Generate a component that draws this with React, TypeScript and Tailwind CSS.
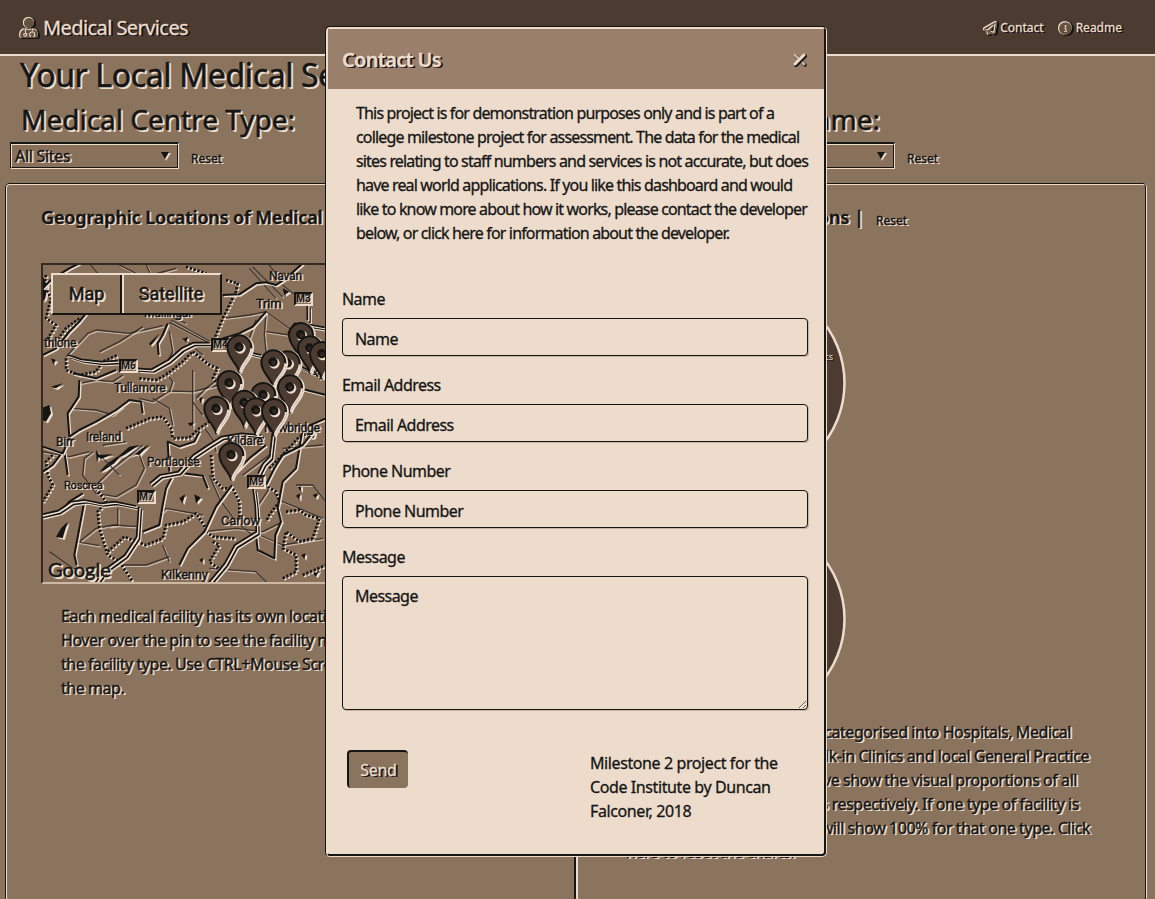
import React from "react";
import { FaUserMd, FaRegPaperPlane, FaInfoCircle } from "react-icons/fa";

const raised =
  "text-[#151514] [-webkit-text-stroke:0.4px_#151514] [text-shadow:1px_1px_0_#eddccc,2px_1px_0_#eddccc]";
const raisedLarge =
  "text-[#151514] [-webkit-text-stroke:0.5px_#151514] [text-shadow:1px_1px_0_#eddccc,2px_1px_0_#eddccc,2px_2px_0_#eddccc]";
const onDark =
  "text-[#eddccc] [-webkit-text-stroke:0.3px_#eddccc] [text-shadow:1px_1px_0_#151514,2px_1px_0_#151514]";
const iconRelief =
  "text-[#66513f] [filter:drop-shadow(-1px_0_0_#eddccc)_drop-shadow(0_-1px_0_#eddccc)_drop-shadow(1px_1px_0_#151514)_drop-shadow(1px_0_0_#151514)]";

const motorways = [
  "M100 305 L140 318 L200 325 L250 322 M305 345 L350 348 L400 320 L440 285 L475 268 L525 268 M640 296 L680 305",
  "M15 785 L70 772 L110 745 L150 740 L200 750 L240 745 L305 758 M345 690 L375 665 L430 655 L475 605 L520 575 L560 550 L620 540 L680 545",
  "M312 760 L306 850 L270 905 L215 945 L180 990",
  "M655 705 L662 760 L665 835 L600 875 L570 930 L520 990",
  "M670 660 L685 630 L705 610 L712 550 L715 520",
  "M818 155 L818 200",
  "M740 350 L790 335 L830 355 L870 350",
  "M760 240 L780 210 L830 215 L870 222",
  "M800 250 L815 270 L800 290 L820 330 L850 370",
];
const roads = [
  "M20 300 L60 280 L100 230 L130 200 L170 150",
  "M130 375 L128 425 L95 475 L100 545",
  "M110 355 L180 370 L240 345",
  "M100 545 L130 525 L180 500 L240 465 L280 435 L315 440 L320 475",
  "M560 120 L610 118 L660 85 L690 82 L720 90 L750 70 L800 25",
  "M395 205 L380 240 L365 265 L368 300",
  "M690 170 L650 215 L610 235 L560 250",
  "M145 740 L130 820 L115 900 L122 930",
  "M408 665 L390 700 L380 750 L370 810 L320 830",
  "M588 690 L540 755 L505 830 L455 880 L430 930",
  "M870 490 L800 520 L780 640 L740 680 L725 760 L735 800 L718 840 L715 910 L665 885 L660 840",
  "M80 590 L50 630 L20 650 M85 590 L95 660",
  "M20 575 L80 595 L100 550",
  "M400 650 L395 560 L430 575 L475 560 L490 530",
  "M440 655 L500 662 L515 700",
  "M740 430 L790 400 L870 420",
  "M20 100 L50 70 L100 40 L130 25",
  "M140 715 L100 740 L75 770 M600 650 L640 610 L690 570",
  "M840 520 L800 570 L740 600 L715 640 L690 690",
];
const lanes = [
  "M90 305 L155 235 L180 225 L280 235 L380 212",
  "M405 195 L520 258 M400 202 L515 262 M415 190 L450 205",
  "M190 290 L250 260 L320 215",
  "M560 190 L640 180 L690 170 L780 235",
  "M690 170 L685 240 L690 290 M740 90 L770 115 L800 130",
  "M660 195 L640 250 L600 245 M690 230 L760 240",
  "M130 385 L180 375 L230 380 L260 360 M105 460 L180 465 L230 480 L260 455",
  "M310 430 L350 440 L400 408 L470 410 L550 390",
  "M400 410 L410 380 L390 350 M350 430 L400 460 L410 510",
  "M470 345 L470 520 M470 440 L500 480",
  "M560 360 L510 400 L480 430",
  "M20 590 L100 605 L160 590 M200 570 L270 560",
  "M170 590 L145 610 L140 660 L180 715 L240 725 L300 690 L325 640 L310 600",
  "M380 770 L390 760 L500 780 M245 760 L245 810 L220 815",
  "M130 860 L180 820 L230 810 L310 815 M120 860 L190 872",
  "M230 930 L330 930 L400 905 M380 870 L400 920",
  "M500 830 L600 820 L680 830 L740 800",
  "M520 660 L550 730 L600 800 L660 850",
  "M660 760 L700 700 L740 740 L860 790 M670 840 L740 870 L860 850",
  "M540 590 L535 560 L500 510 M620 660 L700 600",
  "M40 890 L110 940 L170 950 M520 940 L660 950 L700 990",
  "M160 25 L190 60 M250 30 L300 55 M330 28 L345 60 L420 40",
  "M400 230 L410 290 L395 320 M440 250 L500 300",
  "M780 690 L830 690 L870 740 M740 580 L860 570",
  "M640 40 L720 130 M650 35 L740 125 M700 30 L740 80",
  "M180 690 L230 640 L320 570 M200 610 L250 660",
];
const borders = [
  "M450 35 L510 55 M570 75 L605 85 L600 110 L560 190 L540 240 L530 265",
  "M30 60 L25 90 L45 130 L30 190 L60 210 L30 260",
  "M90 310 L90 345 L130 360 L180 350 L200 320 L245 300",
  "M470 290 L520 330 L545 340 L530 370 L545 385 L590 400",
  "M270 520 L340 490 L380 485 L405 520 L410 550 L460 548 L490 520 L520 500",
  "M310 370 L360 375 L390 360 L440 320 L470 290",
  "M50 600 L30 620 L35 660 L50 690 L20 740",
  "M180 700 L210 740 L185 770 L190 820 L215 900 L250 920 L290 980",
  "M215 890 L265 845 L300 860 L330 870 L380 850 L390 810 L440 800 L480 775 L510 820",
  "M525 600 L530 670 L560 700 L590 700 L610 740 L610 800",
  "M510 830 L530 845 L600 850 M530 860 L550 870 L520 920 L560 950",
  "M695 695 L720 710 L730 740 L700 780 L690 800 M750 770 L790 765 L810 780 L850 790 L830 850 L790 860 L750 830 L740 880 L780 900 L780 950 L740 970",
  "M700 640 L740 600 L790 545 L830 530",
  "M130 190 L90 220 L60 260 M800 960 L870 930",
];
const hills =
  "M340 265 L370 235 L352 262 L342 272Z M442 252 L455 245 L450 265Z M430 730 L447 718 L440 745Z M475 718 L495 728 L480 745Z M190 650 L215 625 L260 595 L235 625 L205 645Z M180 600 L230 598 L195 612Z M240 610 L280 575 L310 570 L265 600Z M275 605 L340 568 L310 600 L295 598Z M180 585 L190 600 L182 620Z M785 695 L795 690 L795 710Z M830 720 L845 715 L840 730Z M780 722 L792 715 L790 735Z M820 550 L840 520 L834 548Z M795 900 L808 895 L806 912Z M490 915 L500 908 L500 925Z M75 820 L95 800 L80 850 L60 845Z M15 460 L40 450 L45 475 L30 500 L20 495Z M45 395 L80 385 L60 400Z M488 425 L500 428 L494 445Z M18 60 L35 90 L28 130 L20 140Z M45 310 L60 315 L52 328Z M740 100 L760 110 L745 120Z M455 505 L475 500 L465 515Z M830 955 L850 945 L840 965Z";

const pins: [number, number][] = [
  [795, 240], [755, 325], [822, 280], [712, 322], [858, 297], [610, 277], [682, 420],
  [580, 384], [762, 397], [625, 443], [541, 461], [660, 466], [714, 468], [586, 600],
];

const places: [string, string][] = [
  ["Navan", "left-[226px] top-[4px] text-[12px]"],
  ["Trim", "left-[213px] top-[32px] text-[13px]"],
  ["Mullingar", "left-[101px] top-[41px] text-[12px]"],
  ["thlone", "left-[1px] top-[71px] text-[12px]"],
  ["Tullamore", "left-[71px] top-[116px] text-[12px]"],
  ["Ireland", "left-[43px] top-[165px] text-[12px]"],
  ["Birr", "left-[13px] top-[170px] text-[12px]"],
  ["Portlaoise", "left-[104px] top-[190px] text-[12px]"],
  ["Roscrea", "left-[21px] top-[214px] text-[11px]"],
  ["Kildare", "left-[184px] top-[169px] text-[12px]"],
  ["Newbridge", "left-[221px] top-[156px] text-[12px]"],
  ["Carlow", "left-[178px] top-[249px] text-[13px]"],
  ["Kilkenny", "left-[118px] top-[303px] text-[13px]"],
];
const shields: [string, string][] = [
  ["M3", "left-[251px] top-[27px]"],
  ["M4", "left-[168px] top-[73px]"],
  ["M6", "left-[76px] top-[94px]"],
  ["M7", "left-[94px] top-[225px]"],
  ["M9", "left-[204px] top-[210px]"],
];

function Relief({ d, w, dash, soft }: { d: string; w: number; dash?: string; soft?: boolean }) {
  return (
    <g fill="none" strokeWidth={w} strokeDasharray={dash} strokeLinejoin="round" opacity={soft ? 0.65 : 1}>
      <path d={d} stroke="#eddccc" transform="translate(4 4)" />
      <path d={d} stroke="#151514" />
    </g>
  );
}

function Pin({ x, y }: { x: number; y: number }) {
  const d = "M0 76 C-4 48 -36 34 -36 0 A36 36 0 0 1 36 0 C36 34 4 48 0 76Z";
  return (
    <g transform={`translate(${x} ${y})`}>
      <path d={d} fill="#eddccc" stroke="#eddccc" strokeWidth="7" transform="translate(5 2)" />
      <path d={d} fill="#4c3b30" stroke="#151514" strokeWidth="6" />
      <path d="M36 3 C34 34 5 48 2 74" fill="none" stroke="#eddccc" strokeWidth="6" />
      <circle r="16" cx="3" cy="3" fill="#eddccc" />
      <circle r="14" cx="-1" cy="-1" fill="#151514" />
      <circle r="7" cx="1" cy="1" fill="#33281f" />
    </g>
  );
}

function SiteMap() {
  return (
    <div className="relative h-[321px] w-[500px] overflow-hidden border-2 border-t-[#332a22] border-l-[#332a22] border-b-[#cdb8a3] border-r-[#cdb8a3] bg-[#88705b] font-[Roboto,sans-serif]">
      <svg className="absolute -left-[2px] -top-[2px] h-[321px] w-[500px]" viewBox="15 24 1500 963">
        <path d={hills} fill="#eddccc" transform="translate(6 5)" />
        <path d={hills} fill="#151514" />
        {lanes.map((d) => <Relief key={d} d={d} w={4} soft />)}
        {borders.map((d) => <Relief key={d} d={d} w={8} dash="7 5" />)}
        {roads.map((d) => <Relief key={d} d={d} w={6} />)}
        {motorways.map((d) => (
          <g key={d} fill="none" strokeLinejoin="round">
            <path d={d} stroke="#eddccc" strokeWidth="6" transform="translate(7 6)" />
            <path d={d} stroke="#151514" strokeWidth="5" transform="translate(4 3)" />
            <path d={d} stroke="#eddccc" strokeWidth="5" transform="translate(0 -1)" />
            <path d={d} stroke="#151514" strokeWidth="5" transform="translate(-4 -5)" />
          </g>
        ))}
      </svg>
      {places.map(([name, pos]) => (
        <span key={name} className={`absolute leading-[14px] tracking-[-0.2px] ${raised} ${pos}`}>{name}</span>
      ))}
      {shields.map(([name, pos]) => (
        <span key={name} className={`absolute h-[14px] w-[19px] border-2 border-t-[#151514] border-l-[#151514] border-b-[#eddccc] border-r-[#eddccc] bg-[#88705b] text-center text-[10px] font-bold leading-[10px] text-[#151514] [text-shadow:1px_1px_0_#eddccc] ${pos}`}>{name}</span>
      ))}
      <svg className="absolute -left-[2px] -top-[2px] h-[321px] w-[500px]" viewBox="15 24 1500 963">
        {pins.map(([x, y]) => <Pin key={`${x}-${y}`} x={x} y={y} />)}
      </svg>
      <div className="absolute left-[8px] top-[8px] flex h-[42px] w-[171px] border-2 border-t-[#eddccc] border-l-[#eddccc] border-b-[#151514] border-r-[#151514] bg-[#8b745e] text-[18px] leading-[37px]">
        <span className={`w-[69px] border-r-2 border-[#151514] text-center ${raisedLarge}`}>Map</span>
        <span className={`flex-1 border-l-2 border-[#eddccc] pr-[2px] text-center ${raisedLarge}`}>Satellite</span>
      </div>
      <span className={`absolute left-[5px] top-[292px] font-[Lato,sans-serif] text-[20px] leading-[24px] ${raisedLarge}`}>Google</span>
    </div>
  );
}

function Picker({ value }: { value: string }) {
  return (
    <div className="flex h-[27px] w-[169px] border border-t-2 border-b-[#eddccc] border-l-[#151514] border-r-[#eddccc] border-t-[#151514]">
      <div className={`flex flex-1 items-center justify-between border border-b-[#151514] border-l-[#eddccc] border-r-[#151514] border-t-[#eddccc] bg-[#88705b] pl-[3px] pr-[6px] text-[16px] leading-[22px] tracking-[-0.3px] ${raised}`}>
        <span>{value}</span>
        <svg className="h-[10px] w-[11px]" viewBox="0 0 11 10">
          <path d="M3 2h8l-5 8z" fill="#eddccc" />
          <path d="M1 1h8l-4 7z" fill="#151514" />
        </svg>
      </div>
    </div>
  );
}

function Card({ children }: { children: React.ReactNode }) {
  return (
    <div className="group flex h-[719px] w-[571px] rounded-[5px] border border-b-[#eddccc] border-l-[#151514] border-r-[#eddccc] border-t-[#151514] first:w-[570px] first:border-r-[#151514] last:w-[572px]">
      <div className="flex-1 rounded-[4px] border border-b-[#151514] border-l-[#eddccc] border-r-[#151514] border-t-[#eddccc] group-first:border-r-transparent group-last:border-l-2">{children}</div>
    </div>
  );
}

function Pie() {
  return (
    <svg className="h-[200px] w-[200px]" viewBox="0 0 200 200">
      <circle cx="100" cy="100" r="98.500" fill="#4c3b30" stroke="#eddccc" strokeWidth="2.500" />
    </svg>
  );
}

function Field({ label, multiline }: { label: string; multiline?: boolean }) {
  const box =
    "block w-[466px] rounded-[4px] border border-[#151514] bg-[#eddccc] px-[12px] text-[16px] leading-[24px] tracking-[-0.55px] text-[#151514] shadow-[1px_1px_0_#c9b4a0] placeholder:text-[#151514] placeholder:opacity-100";
  return (
    <label className="block h-[86px]">
      <span className="mb-[7px] block h-[24px] leading-[24px] tracking-[-0.55px]">{label}</span>
      {multiline ? (
        <textarea placeholder={label} className={`h-[134px] py-[7px] ${box}`} />
      ) : (
        <input placeholder={label} className={`h-[38px] pt-[3px] ${box}`} />
      )}
    </label>
  );
}

function ContactDialog() {
  return (
    <div className="absolute left-[325px] top-[26px] h-[831px] w-[502px] overflow-hidden rounded-[5px] border border-l-[#151514] border-t-[#151514] border-b-[#eddccc] border-r-[#eddccc] text-[#151514] [-webkit-text-stroke:0.3px]">
      <div className="h-[829px] w-[500px] rounded-[4px] border-2 border-b-[#151514] border-l-[#eddccc] border-r-[#151514] border-t-[#eddccc] bg-[#eddccc]">
        <div className="flex h-[60px] items-center justify-between bg-[#9a7f6a] pl-[14px] pr-[16px]">
          <span className={`pt-px text-[20px] font-semibold leading-[30px] tracking-[-0.7px] ${onDark}`}>Contact Us</span>
          <svg className="mt-px h-[16px] w-[16px]" viewBox="0 0 16 16" fill="none" strokeLinecap="round">
            <path d="M4 4l9 9" stroke="#151514" strokeWidth="3.500" />
            <path d="M3 3l9 9" stroke="#c7b29e" strokeWidth="3" />
            <path d="M13 4l-9 9" stroke="#151514" strokeWidth="4" />
            <path d="M12 3l-9 9" stroke="#eddccc" strokeWidth="3" />
          </svg>
        </div>
        <div className="px-[14px] pt-[12px]">
          <p className="mb-[42px] whitespace-nowrap pl-[14px] leading-[24px] tracking-[-0.84px]">
            This project is for demonstration purposes only and is part of a<br />
            college milestone project for assessment. The data for the medical<br />
            sites relating to staff numbers and services is not accurate, but does<br />
            have real world applications. If you like this dashboard and would<br />
            like to know more about how it works, please contact the developer<br />
            below, or click here for information about the developer.
          </p>
          <Field label="Name" />
          <Field label="Email Address" />
          <Field label="Phone Number" />
          <Field label="Message" multiline />
          <div className="flex pl-[5px] pt-[119px]">
            <button className={`h-[38px] w-[61px] rounded-[4px] border-l-2 border-t-2 border-[#151514] bg-[#8b745e] tracking-[-0.3px] ${onDark}`}>Send</button>
            <p className="whitespace-nowrap pl-[182px] pt-px leading-[24px] tracking-[-0.4px]">
              Milestone 2 project for the<br />Code Institute by Duncan<br />Falconer, 2018
            </p>
          </div>
        </div>
      </div>
    </div>
  );
}

export default function App() {
  return (
    <div className="relative h-[899px] w-[1155px] overflow-hidden bg-[#8b745e] font-['Noto_Sans',sans-serif] text-[16px]">
      <nav className="flex h-[56px] items-center justify-between border-b-2 border-[#eddccc] bg-[#4c3b30] pl-[20px] pr-[33px]">
        <div className={`flex items-center gap-[5px] pt-px text-[20px] tracking-[-0.58px] ${onDark}`}>
          <FaUserMd className={`h-[20px] w-[18px] ${iconRelief}`} />
          <span>Medical Services</span>
        </div>
        <div className={`flex items-center pt-[2px] text-[12px] ${onDark}`}>
          <FaRegPaperPlane className={`mr-[3px] h-[13px] w-[13px] ${iconRelief}`} />
          <span className="mr-[15px]">Contact</span>
          <FaInfoCircle className={`mr-[4px] h-[13px] w-[13px] ${iconRelief}`} />
          <span>Readme</span>
        </div>
      </nav>
      <h1 className={`h-[41px] whitespace-nowrap pl-[20px] text-[32px] leading-[38px] tracking-[-0.37px] ${raisedLarge}`}>Your Local Medical Services</h1>
      <div className="flex h-[86px]">
        <div className="w-[716px] pl-[10px]">
          <h2 className={`h-[45px] pl-[11px] text-[28px] leading-[44px] ${raisedLarge}`}>Medical Centre Type:</h2>
          <div className="flex">
            <Picker value="All Sites" />
            <span className={`pl-[12px] pt-[7px] text-[12px] leading-[20px] ${raised}`}>Reset</span>
          </div>
        </div>
        <div className="pl-[10px]">
          <h2 className={`flex h-[45px] w-[154px] justify-end whitespace-nowrap text-[28px] leading-[44px] ${raisedLarge}`}>Name:</h2>
          <div className="flex">
            <Picker value="" />
            <span className={`pl-[12px] pt-[7px] text-[12px] leading-[20px] ${raised}`}>Reset</span>
          </div>
        </div>
      </div>
      <div className="flex pl-[5px]">
        <Card>
          <div className="pl-[34px] pt-[17px]">
            <h3 className={`mb-[31px] h-[30px] whitespace-nowrap text-[18px] font-semibold leading-[30px] tracking-[-0.12px] ${raised}`}>Geographic Locations of Medical Sites</h3>
            <SiteMap />
            <p className={`whitespace-nowrap pl-[20px] pt-[20px] leading-[24px] tracking-[-0.46px] ${raised}`}>
              Each medical facility has its own location on the map.<br />
              Hover over the pin to see the facility name and<br />
              the facility type. Use CTRL+Mouse Scroll to zoom<br />
              the map.
            </p>
          </div>
        </Card>
        <Card>
          <div className="pl-[48px] pt-[17px]">
            <div className="flex h-[30px]">
              <h3 className={`flex w-[238px] justify-end whitespace-nowrap text-[18px] font-semibold leading-[30px] ${raised}`}>Proportions |</h3>
              <span className={`pl-[12px] pt-[9px] text-[12px] leading-[20px] ${raised}`}>Reset</span>
            </div>
            <div className="relative flex flex-col gap-[36px] pl-[20px] pt-[51px]">
              <Pie />
              <Pie />
              <span className="absolute left-[165px] top-[118px] w-[42px] text-right text-[9px] leading-[14px] text-[#eddccc] [text-shadow:1px_1px_0_#151514]">Clinics</span>
            </div>
            <div className={`flex flex-col whitespace-nowrap pt-[1px] leading-[24px] tracking-[-0.45px] ${raised}`}>
              <span className="flex w-[445px] justify-end">categorised into Hospitals, Medical</span>
              <span className="flex w-[463px] justify-end">Walk-in Clinics and local General Practice</span>
              <span className="flex w-[451px] justify-end">above show the visual proportions of all</span>
              <span className="flex w-[453px] justify-end">facilities respectively. If one type of facility is</span>
              <span className="flex w-[464px] justify-end">it will show 100% for that one type. Click</span>
              <span>here to reset the charts.</span>
            </div>
          </div>
        </Card>
      </div>
      <ContactDialog />
    </div>
  );
}
